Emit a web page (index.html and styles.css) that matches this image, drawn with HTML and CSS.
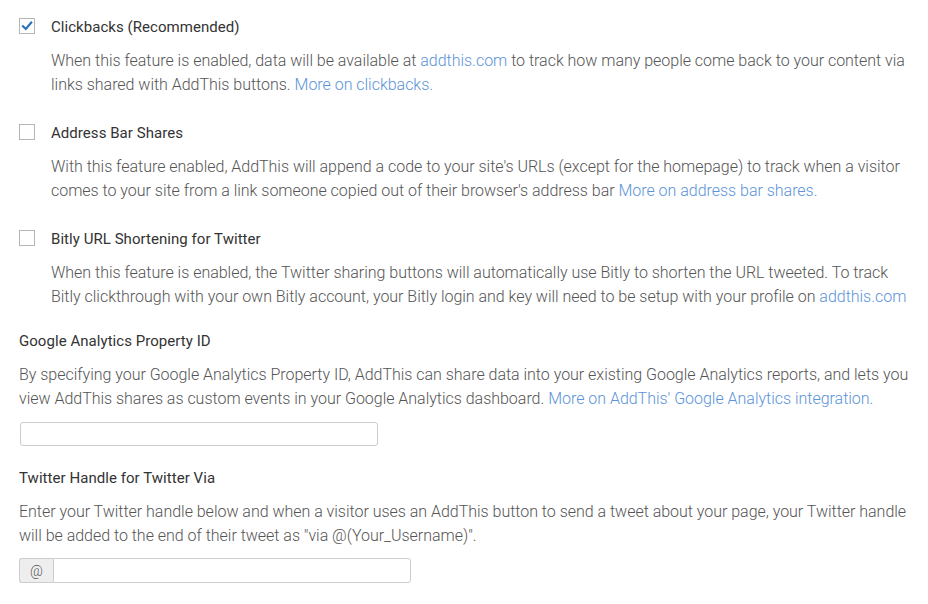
FILE: index.html
```html
<!DOCTYPE html>
<html>
<head>
<meta charset="utf-8">
<link rel="stylesheet" href="styles.css">
</head>
<body>
<div class="page">
  <div class="option">
    <div class="opt-head">
      <span class="check checked"><svg viewBox="0 0 16 16" width="16" height="16"><path d="M4 8.2 L6.8 11 L12.2 4.6" fill="none" stroke="#2f72b8" stroke-width="2.2" stroke-linecap="square"/></svg></span>
      <span class="opt-title">Clickbacks (Recommended)</span>
    </div>
    <p class="desc indent">When this feature is enabled, data will be available at <a href="#">addthis.com</a> to track how many people come back to your content via links shared with AddThis buttons. <a href="#">More on clickbacks.</a></p>
  </div>
  <div class="option">
    <div class="opt-head">
      <span class="check"></span>
      <span class="opt-title">Address Bar Shares</span>
    </div>
    <p class="desc indent">With this feature enabled, AddThis will append a code to your site's URLs (except for the homepage) to track when a visitor comes to your site from a link someone copied out of their browser's address bar <a href="#">More on address bar shares.</a></p>
  </div>
  <div class="option">
    <div class="opt-head">
      <span class="check"></span>
      <span class="opt-title">Bitly URL Shortening for Twitter</span>
    </div>
    <p class="desc indent">When this feature is enabled, the Twitter sharing buttons will automatically use Bitly to shorten the URL tweeted. To track Bitly clickthrough with your own Bitly account, your Bitly login and key will need to be setup with your profile on <a href="#">addthis.com</a></p>
  </div>
  <div class="field">
    <div class="field-title">Google Analytics Property ID</div>
    <p class="desc">By specifying your Google Analytics Property ID, AddThis can share data into your existing Google Analytics reports, and lets you view AddThis shares as custom events in your Google Analytics dashboard. <a href="#">More on AddThis' Google Analytics integration.</a></p>
    <input class="text-input ga" type="text">
  </div>
  <div class="field">
    <div class="field-title">Twitter Handle for Twitter Via</div>
    <p class="desc">Enter your Twitter handle below and when a visitor uses an AddThis button to send a tweet about your page, your Twitter handle will be added to the end of their tweet as "via @(Your_Username)".</p>
    <div class="input-group">
      <span class="addon">@</span>
      <input class="group-input" type="text">
    </div>
  </div>
</div>
</body>
</html>
```
FILE: styles.css
```css
html, body {
  margin: 0;
  padding: 0;
  background: #fff;
}
body {
  font-family: Roboto, "Noto Sans", sans-serif;
}
.page {
  padding: 15px 12px 0 19px;
}
.option {
  margin-bottom: 24px;
}
.opt-head {
  display: flex;
  align-items: center;
  height: 24px;
}
.check {
  box-sizing: border-box;
  width: 16px;
  height: 16px;
  border: 1.5px solid #b5b5b5;
  background: #fff;
  display: inline-flex;
  align-items: center;
  justify-content: center;
  margin-right: 16px;
  margin-top: -2px;
}
.check svg {
  display: block;
  margin: -1.5px;
}
.opt-title, .field-title {
  font-size: 15px;
  font-weight: 400;
  color: #333;
  letter-spacing: 0.05px;
}
.desc {
  font-size: 16px;
  font-weight: 300;
  color: #555;
  line-height: 24px;
  letter-spacing: -0.02px;
  margin: 10px 0 0 0;
}
.indent {
  margin-left: 32px;
  margin-right: 6px;
}
.desc a {
  color: #5b93d9;
  text-decoration: none;
}
.field {
  margin-bottom: 24px;
}
.field-title {
  height: 24px;
  line-height: 24px;
  margin-top: -4px;
}
.text-input {
  box-sizing: border-box;
  display: block;
  margin: 11px 0 0 1px;
  width: 358px;
  height: 24px;
  border: 1px solid #ccc;
  border-radius: 3px;
  padding: 0 6px;
  font-family: Roboto, sans-serif;
}
.input-group {
  display: flex;
  width: 392px;
  height: 25px;
  margin-top: 10px;
  box-sizing: border-box;
}
.addon {
  box-sizing: border-box;
  width: 34px;
  height: 25px;
  background: #eee;
  border: 1px solid #ccc;
  border-right: none;
  border-radius: 3px 0 0 3px;
  display: flex;
  align-items: center;
  justify-content: center;
  font-size: 14px;
  font-weight: 300;
  color: #555;
}
.group-input {
  box-sizing: border-box;
  flex: 1;
  height: 25px;
  border: 1px solid #ccc;
  border-radius: 0 3px 3px 0;
  margin: 0;
  padding: 0 6px;
  font-family: Roboto, sans-serif;
}
```
